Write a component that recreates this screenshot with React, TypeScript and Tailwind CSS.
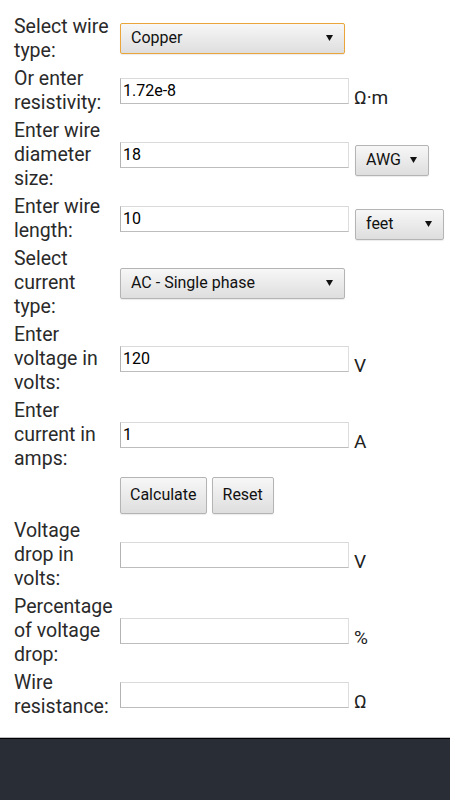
import React from 'react';

const font = { fontFamily: 'Roboto, "Noto Sans", sans-serif' };

function Arrow() {
  return (
    <svg width="7" height="6" viewBox="0 0 7 6" className="shrink-0">
      <polygon points="0,0 7,0 3.5,6" fill="#111" />
    </svg>
  );
}

function Select({ value, width, focused = false, className = '' }: { value: string; width: string; focused?: boolean; className?: string }) {
  return (
    <div
      className={`${width} ${className} h-[31px] flex items-center justify-between pl-[10px] pr-[11px] rounded-[2px] border bg-gradient-to-b from-[#f7f7f7] to-[#dedede] text-[16px] text-[#111] shadow-[0_1px_1px_rgba(0,0,0,0.08)] ${
        focused ? 'border-[#eaa53a]' : 'border-[#b4b4b4]'
      }`}
    >
      <span>{value}</span>
      <Arrow />
    </div>
  );
}

function Field({ value = '' }: { value?: string }) {
  return (
    <div className="w-[229px] h-[26px] flex items-center pl-[2px] border border-t-[#dadada] border-l-[#b3b3b3] border-b-[#bdbdbd] border-r-[#dedede] bg-white text-[16px] text-black">
      {value}
    </div>
  );
}

function Unit({ children }: { children: React.ReactNode }) {
  return <span className="ml-[5px] text-[19px] leading-none text-[#222] -mb-[3px]">{children}</span>;
}

function Label({ children }: { children: React.ReactNode }) {
  return <div className="w-[102px] shrink-0 text-[19.5px] leading-6 text-[#2a2a2a] whitespace-nowrap">{children}</div>;
}

function Row({ label, children }: { label: React.ReactNode; children?: React.ReactNode }) {
  return (
    <div className="flex items-center">
      <Label>{label}</Label>
      <div className="ml-[4px] flex items-end">{children}</div>
    </div>
  );
}

export default function App() {
  return (
    <div className="w-[450px] h-[800px] flex flex-col bg-white" style={font}>
      <div className="flex-1 flex flex-col gap-[4px] pt-[15px] pl-[14px]">
        <Row label={<>Select wire<br />type:</>}>
          <Select value="Copper" width="w-[225px]" focused className="mb-[2px]" />
        </Row>
        <Row label={<>Or enter<br />resistivity:</>}>
          <Field value="1.72e-8" />
          <Unit>Ω·m</Unit>
        </Row>
        <div className="flex items-center">
          <Label>
            Enter wire<br />diameter<br />size:
          </Label>
          <div className="ml-[4px] flex items-center">
            <Field value="18" />
            <Select value="AWG" width="w-[74px]" className="ml-[6px] mt-[10px]" />
          </div>
        </div>
        <div className="flex items-center">
          <Label>
            Enter wire<br />length:
          </Label>
          <div className="ml-[4px] flex items-center">
            <Field value="10" />
            <Select value="feet" width="w-[89px]" className="ml-[6px] mt-[10px]" />
          </div>
        </div>
        <Row label={<>Select<br />current<br />type:</>}>
          <Select value="AC - Single phase" width="w-[225px]" />
        </Row>
        <Row label={<>Enter<br />voltage in<br />volts:</>}>
          <Field value="120" />
          <Unit>V</Unit>
        </Row>
        <Row label={<>Enter<br />current in<br />amps:</>}>
          <Field value="1" />
          <Unit>A</Unit>
        </Row>
        <div className="flex items-center h-[40px] pl-[106px] gap-[5px]">
          <button className="h-[37px] px-[9px] rounded-[2px] border border-[#b4b4b4] bg-gradient-to-b from-[#f7f7f7] to-[#dedede] text-[16px] text-[#111] shadow-[0_1px_1px_rgba(0,0,0,0.08)]">
            Calculate
          </button>
          <button className="h-[37px] px-[10px] rounded-[2px] border border-[#b4b4b4] bg-gradient-to-b from-[#f7f7f7] to-[#dedede] text-[16px] text-[#111] shadow-[0_1px_1px_rgba(0,0,0,0.08)]">
            Reset
          </button>
        </div>
        <Row label={<>Voltage<br />drop in<br />volts:</>}>
          <Field />
          <Unit>V</Unit>
        </Row>
        <Row label={<>Percentage<br />of voltage<br />drop:</>}>
          <Field />
          <Unit>%</Unit>
        </Row>
        <Row label={<>Wire<br />resistance:</>}>
          <Field />
          <Unit>Ω</Unit>
        </Row>
      </div>
      <div className="h-[63px] border-t border-t-[#bdbdbd] bg-[#292d36] shadow-[inset_0_1px_0_#000]" />
    </div>
  );
}
